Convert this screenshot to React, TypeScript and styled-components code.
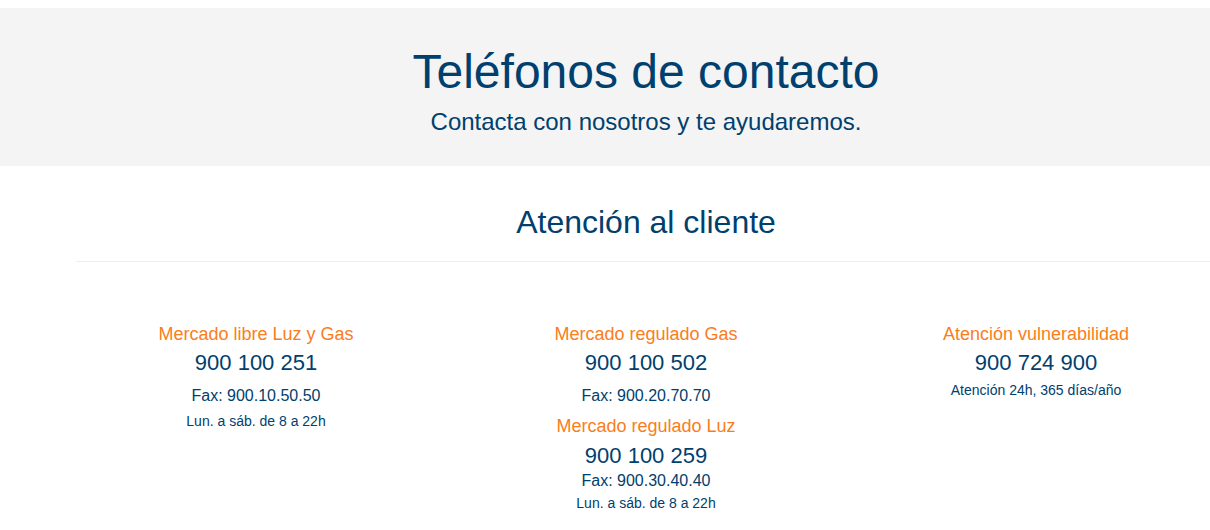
import React from "react";
import styled, { createGlobalStyle } from "styled-components";

const GlobalStyle = createGlobalStyle`
  html, body {
    margin: 0;
    padding: 0;
    background: #ffffff;
    overflow-x: hidden;
  }
  body {
    font-family: "Liberation Sans", Arial, Helvetica, sans-serif;
    color: #00406e;
  }
`;

type Line = { label: string; phone: string; fax?: string; hours?: string; note?: string };

const columns: Line[][] = [
  [{ label: "Mercado libre Luz y Gas", phone: "900 100 251", fax: "Fax: 900.10.50.50", hours: "Lun. a sáb. de 8 a 22h" }],
  [
    { label: "Mercado regulado Gas", phone: "900 100 502", fax: "Fax: 900.20.70.70" },
    { label: "Mercado regulado Luz", phone: "900 100 259", fax: "Fax: 900.30.40.40", hours: "Lun. a sáb. de 8 a 22h" },
  ],
  [{ label: "Atención vulnerabilidad", phone: "900 724 900", note: "Atención 24h, 365 días/año" }],
];

export default function App() {
  return (
    <>
      <GlobalStyle />
      <SPage>
        <SHero>
          <STitle>Teléfonos de contacto</STitle>
          <SSubtitle>Contacta con nosotros y te ayudaremos.</SSubtitle>
        </SHero>

        <SContainer>
          <SSectionTitle>Atención al cliente</SSectionTitle>
          <SDivider />
        </SContainer>

        <SRow>
          {columns.map((col, i) => (
            <SColumn key={i}>
              {col.map((item, j) => (
                <SBlock key={j}>
                  {/* el segundo bloque de la columna va más apretado */}
                  <SLabel $mt={j > 0 ? 11 : 0}>{item.label}</SLabel>
                  <SPhone $mt={j > 0 ? 8 : 7}>{item.phone}</SPhone>
                  {item.fax && <SFax $mt={j > 0 ? 4 : 12}>{item.fax}</SFax>}
                  {item.hours && <SHours $mt={j > 0 ? 5 : 8}>{item.hours}</SHours>}
                  {item.note && <SNote>{item.note}</SNote>}
                </SBlock>
              ))}
            </SColumn>
          ))}
        </SRow>
      </SPage>
    </>
  );
}

const SPage = styled.div`
  width: 1292px;
  padding-top: 8px;
`;

const SHero = styled.div`
  background-color: #f4f4f4;
  padding: 38px 0 30px;
  text-align: center;
`;

const STitle = styled.h1`
  margin: 0;
  font-size: 48px;
  line-height: 52.8px;
  font-weight: 400;
`;

const SSubtitle = styled.p`
  margin: 9px 0 0;
  font-size: 24px;
  line-height: 28px;
`;

const SContainer = styled.div`
  width: 1140px;
  margin: 0 auto;
  padding: 0 15px;
`;

const SSectionTitle = styled.h2`
  margin: 38px 0 0;
  font-size: 32px;
  line-height: 36px;
  font-weight: 400;
  text-align: center;
`;

const SDivider = styled.hr`
  margin: 21px 0 0;
  border: 0;
  border-top: 1px solid #eeeeee;
  height: 0;
`;

const SRow = styled.div`
  width: 1170px;
  margin: 0 auto;
  padding-top: 62px;
  display: grid;
  grid-template-columns: repeat(3, 390px);
`;

const SColumn = styled.div`
  text-align: center;
`;

const SBlock = styled.div``;

const SLabel = styled.div<{ $mt: number }>`
  margin-top: ${(p) => p.$mt}px;
  color: #fa7d1b;
  font-size: 18px;
  line-height: 20px;
`;

const SPhone = styled.div<{ $mt: number }>`
  margin-top: ${(p) => p.$mt}px;
  font-size: 22px;
  line-height: 24px;
`;

const SFax = styled.div<{ $mt: number }>`
  margin-top: ${(p) => p.$mt}px;
  font-size: 16px;
  line-height: 18px;
`;

const SHours = styled.div<{ $mt: number }>`
  margin-top: ${(p) => p.$mt}px;
  font-size: 14px;
  line-height: 16px;
`;

const SNote = styled.div`
  margin-top: 7px;
  font-size: 14px;
  line-height: 17px;
`;
